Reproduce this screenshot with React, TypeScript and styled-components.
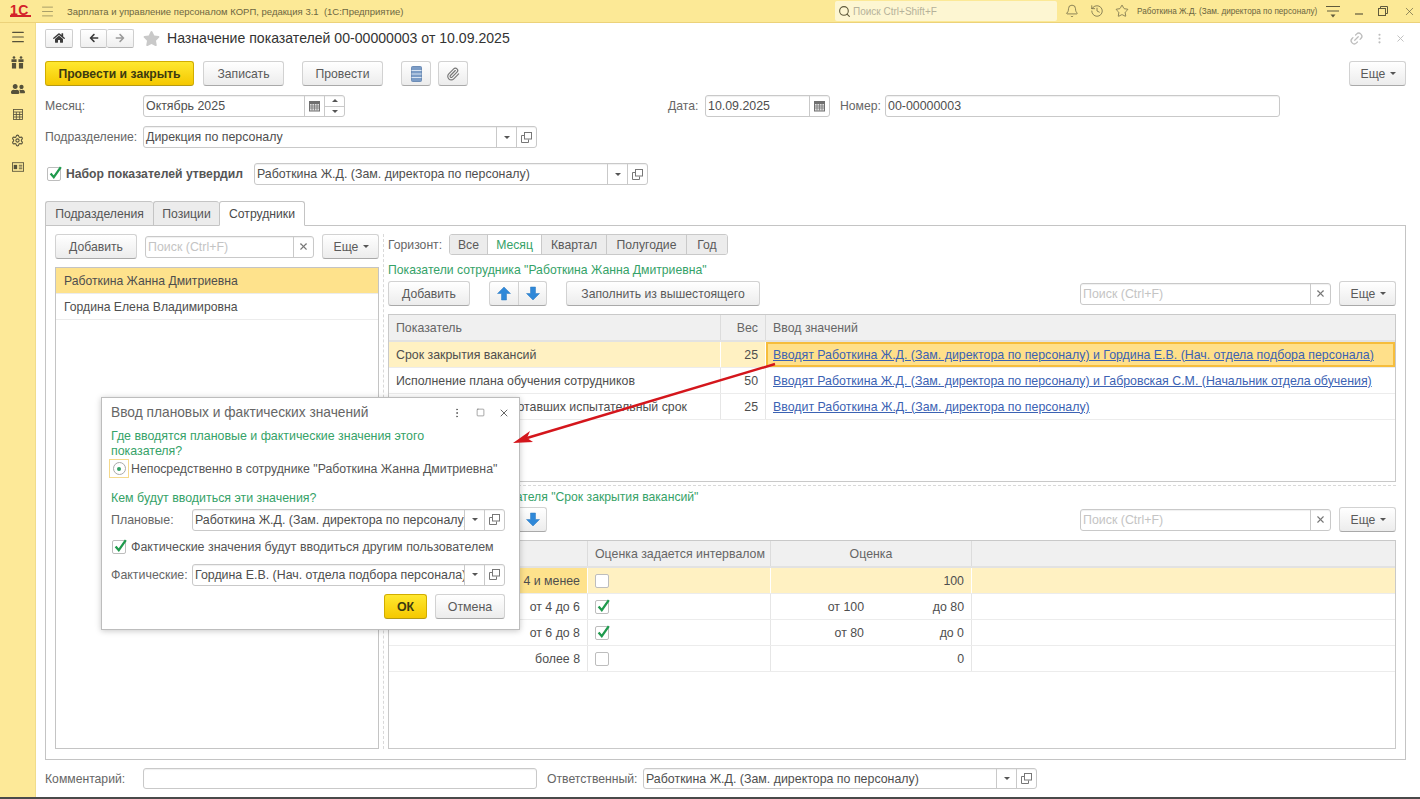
import React from 'react';
import styled, { createGlobalStyle, css } from 'styled-components';
import { FaHome, FaArrowLeft, FaArrowRight, FaStar, FaUserFriends } from 'react-icons/fa';
import { Bell, History, Star, Search as SearchIcon, Paperclip, Link2, MoreVertical, X, Square, Menu, Settings } from 'lucide-react';

const GREEN = '#35a268';
const TEXT = '#4e4e4e';
const LINE = '#c9c9c9';

const Global = createGlobalStyle`
  html, body { margin: 0; padding: 0; height: 100%; background: #fff; }
  body { font-family: "Liberation Sans", Arial, sans-serif; font-size: 12.2px; color: ${TEXT}; overflow: hidden; }
  * { box-sizing: border-box; }
`;

const Page = styled.div`
  position: relative; width: 1420px; height: 799px; display: flex; flex-direction: column;
  overflow: hidden; border-bottom: 2px solid #4a4a4a;
`;
const TopBar = styled.header`
  height: 23px; flex: none; display: flex; align-items: center; background: #fce996;
  border-bottom: 1px solid #ecd27a; color: #6a6440;
`;
const Logo = styled.div`
  width: 36px; padding-left: 10px; flex: none; display: flex; flex-direction: column;
  font: bold 14px/10px "Liberation Sans", sans-serif; color: #d3232a; letter-spacing: 0.5px;
  &::after { content: ''; display: block; width: 21px; height: 2px; background: #d3232a; margin-top: 0; }
`;
const BarMenu = styled.span`display: flex; margin-left: 4px; color: #77724f;`;
const BarTitle = styled.div`
  font-size: 9.5px; margin-left: 12px; width: 404px; white-space: pre; color: #6d6742;
`;
const BarSearch = styled.div`
  width: 222px; height: 20px; margin-left: 364px; background: #fdf6d2; border-radius: 2px; display: flex;
  align-items: center; gap: 2px; padding-left: 3px; font-size: 10px; color: #b5b19a;
`;
const BarIcons = styled.div`
  display: flex; align-items: center; gap: 11px; margin-left: 8px; color: #5f5a3c;
`;
const BarUser = styled.div`
  font-size: 8.2px; margin-left: 8px; width: 182px; white-space: nowrap; color: #6a6440;
`;
const WinIcons = styled.div`
  display: flex; align-items: center; gap: 15px; margin-left: 7px; color: #5f5a3c;
`;
const Body = styled.div`flex: 1; display: flex; min-height: 0;`;
const Sidebar = styled.nav`
  width: 36px; flex: none; background: #fde998; border-right: 1px solid #f0dc8c; display: flex;
  flex-direction: column; align-items: center; gap: 11px; padding: 6px 0 0 0; color: #55513a;
`;
const SideItem = styled.div`width: 16px; height: 15px; display: flex; align-items: center; justify-content: center;`;
const Main = styled.main`
  flex: 1; min-width: 0; display: flex; flex-direction: column; padding: 5px 14px 8px 9px;
`;
const TitleRow = styled.div`display: flex; align-items: center; height: 20px; margin-bottom: 13px;`;
const NavBtn = styled.div<{ $w: number; $dim?: boolean }>`
  width: ${p => p.$w}px; height: 19px; display: flex; align-items: center; justify-content: center;
  border: 1px solid #cfcfcf; border-bottom-color: #b5b5b5; background: linear-gradient(#fff, #efefef);
  color: ${p => (p.$dim ? '#9b9b9b' : '#3a3a3a')};
  border-radius: 2px;
`;
const NavGroup = styled.div`
  display: flex; margin-left: 7px; ${NavBtn} + ${NavBtn} { border-left: 0; }
`;
const StarWrap = styled.div`margin: 0 7px 0 9px; color: #c9c9c9; display: flex;`;
const Title = styled.h1`font-size: 14.1px; font-weight: normal; color: #333; margin: 0; white-space: nowrap; flex: 1;`;
const TitleTools = styled.div`display: flex; gap: 9px; color: #bdbdbd; align-items: center;`;
const LinkIcon = styled(Link2)`transform: rotate(-45deg);`;

const buttonBase = css`
  height: 25px; display: inline-flex; align-items: center; justify-content: center; flex: none;
  border-radius: 3px; white-space: nowrap;
`;
const Btn = styled.div<{ $w: number; $ml?: number }>`
  ${buttonBase}
  width: ${p => p.$w}px; margin-left: ${p => p.$ml ?? 0}px; color: #5a5a5a;
  border: 1px solid #d2d2d2; border-bottom: 1px solid #a9a9a9;
  background: linear-gradient(#fff, #ececec);
`;
const PrimaryBtn = styled.div<{ $w: number; $ml?: number }>`
  ${buttonBase}
  width: ${p => p.$w}px; margin-left: ${p => p.$ml ?? 0}px; font-weight: bold; color: #3d3a10;
  border: 1px solid #d1ad00; border-bottom-color: #b59a14;
  background: linear-gradient(#ffe830, #f5c800);
`;
const MoreBtn = styled(Btn)`
  gap: 5px; padding-left: 2px;
  &::after { content: ''; border: 3px solid transparent; border-top: 3px solid #555; margin-top: 3px; }
`;
const Commands = styled.div`display: flex; align-items: center; margin-bottom: 9px;`;
const Row = styled.div<{ $mb: number; $pr?: number }>`
  display: flex; align-items: center; height: 22px; margin-bottom: ${p => p.$mb}px; padding-right: ${p => p.$pr ?? 0}px;
`;
const Label = styled.label<{ $w?: number; $ml?: number }>`
  color: #666; white-space: nowrap; flex: none; ${p => p.$w && `width: ${p.$w}px;`}
  margin-left: ${p => p.$ml ?? 0}px;
`;
const Field = styled.div<{ $w?: number; $h?: number }>`
  display: flex; height: ${p => p.$h ?? 22}px; ${p => (p.$w ? `width: ${p.$w}px; flex: none;` : 'flex: 1; min-width: 0;')}
  border: 1px solid ${LINE}; border-radius: 3px; background: #fff; box-shadow: inset 0 1px 1px #f0f0f0;
  overflow: hidden;
`;
const FieldText = styled.div<{ $ph?: boolean }>`
  flex: 1; min-width: 0; padding-left: 2px; line-height: 20px; font-size: 12.4px; white-space: nowrap; overflow: hidden;
  color: ${p => (p.$ph ? '#c4c4c4' : TEXT)};
`;
const FieldBtn = styled.div`
  width: 20px; flex: none; border-left: 1px solid ${LINE}; display: flex; align-items: center; justify-content: center; color: #666;
`;
const Spin = styled.div`
  width: 20px; flex: none; border-left: 1px solid ${LINE}; display: flex; flex-direction: column;
`;
const SpinPart = styled.div`
  flex: 1; display: flex; align-items: center; justify-content: center; & + & { border-top: 1px solid ${LINE}; }
`;
const Tri = styled.span<{ $up?: boolean }>`
  width: 0; height: 0; border: 3px solid transparent; border-bottom-width: 0;
  border-top: 3px solid #555;
  ${p => p.$up && 'border-top-width: 0; border-bottom: 3px solid #555; border-top-color: transparent;'}
`;
const CheckBox = styled.span<{ $ml?: number }>`
  width: 14px; height: 14px; flex: none; position: relative; display: inline-block;
  margin-left: ${p => p.$ml ?? 0}px;
  border: 1px solid #bdbdbd; border-radius: 2px; background: #fff;
  svg { position: absolute; left: 0; top: -3px; }
`;
const BoldLabel = styled.span`font-weight: bold; color: #555; margin-left: 5px; width: 188px; flex: none; white-space: nowrap;`;
const Tabs = styled.div`display: flex; height: 25px; flex: none; position: relative; z-index: 1;`;
const Tab = styled.div<{ $w: number; $on?: boolean }>`
  width: ${p => p.$w}px; height: 25px; display: flex; align-items: center; justify-content: center;
  border: 1px solid #c4c4c4; border-right-width: ${p => (p.$on ? 1 : 0)}px; border-radius: 3px 3px 0 0;
  background: ${p => (p.$on ? '#fff' : '#ececec')}; color: ${p => (p.$on ? '#4a4a4a' : '#555')};
  border-bottom-color: ${p => (p.$on ? '#fff' : '#c4c4c4')};
`;
const Panel = styled.section`
  flex: 1; min-height: 0; margin-top: -1px; border: 1px solid #c4c4c4; display: flex; padding: 8px 9px 10px 9px;
`;
const LeftCol = styled.div`width: 324px; flex: none; display: flex; flex-direction: column;`;
const VSplit = styled.div`width: 1px; flex: none; margin: 0 4px; border-left: 1px dashed #d9d9d9;`;
const RightCol = styled.div`flex: 1; min-width: 0; display: flex; flex-direction: column;`;
const Toolbar = styled.div`display: flex; align-items: center; height: 25px; flex: none;`;
const Search = styled(Field)<{ $ml: number }>`
  margin-left: ${p => p.$ml}px;
`;
const ListBox = styled.div`flex: 1; margin-top: 8px; border: 1px solid #c4c4c4; padding: 0;`;
const ListRow = styled.div<{ $on?: boolean }>`
  height: 26px; display: flex; align-items: center; padding-left: 8px; white-space: nowrap;
  background: ${p => (p.$on ? '#fee28c' : '#fff')}; border-bottom: 1px solid #ececec;
`;
const HorizonRow = styled.div`display: flex; align-items: center; height: 21px; flex: none;`;
const Segments = styled.div`
  display: flex; height: 21px; margin-left: 7px; border: 1px solid #c9c9c9; border-radius: 3px; overflow: hidden;
`;
const Segment = styled.div<{ $w: number; $on?: boolean }>`
  width: ${p => p.$w}px; display: flex; align-items: center; justify-content: center;
  background: ${p => (p.$on ? '#fff' : '#ececec')}; color: ${p => (p.$on ? GREEN : '#5a5a5a')};
  & + & { border-left: 1px solid #c9c9c9; }
`;
const GreenTitle = styled.div<{ $mt?: number; $mb?: number }>`
  color: ${GREEN}; white-space: nowrap; margin-top: ${p => p.$mt ?? 0}px; margin-bottom: ${p => p.$mb ?? 0}px; line-height: 15px;
`;
const ArrowGroup = styled.div<{ $ml: number }>`
  margin-left: ${p => p.$ml}px; display: flex; flex: none; height: 25px;
  border: 1px solid #d2d2d2; border-bottom-color: #a9a9a9; border-radius: 3px; background: linear-gradient(#fff, #ececec);
`;
const ArrowPart = styled.div`
  width: 28px; display: flex; align-items: center; justify-content: center;
  & + & { border-left: 1px solid #d2d2d2; }
`;
const Grid = styled.div<{ $h?: number; $grow?: boolean }>`
  border: 1px solid #c9c9c9; flex: ${p => (p.$grow ? 1 : 'none')}; ${p => p.$h && `height: ${p.$h}px;`} margin-top: 8px;
  display: flex; flex-direction: column; overflow: hidden; font-size: 12.35px;
`;
const GridHead = styled.div`display: flex; height: 27px; flex: none; background: #f0f0f0; border-bottom: 2px solid #e2e2e2;`;
const GridRow = styled.div`display: flex; height: 26px; flex: none; border-bottom: 1px solid #ececec;`;
const Cell = styled.div<{ $w?: number; $right?: boolean; $center?: boolean; $bg?: string; $pad?: number; $active?: boolean }>`
  ${p => (p.$w ? `width: ${p.$w}px; flex: none;` : 'flex: 1; min-width: 0;')}
  display: flex; align-items: center; white-space: nowrap; overflow: hidden;
  padding: 0 ${p => p.$pad ?? 7}px;
  justify-content: ${p => (p.$right ? 'flex-end' : p.$center ? 'center' : 'flex-start')};
  background: ${p => p.$bg ?? 'transparent'};
  border-right: 1px solid ${p => (p.$bg ? '#fff' : '#e6e6e6')};
  &:last-child { border-right: 0; }
  ${p => p.$active && 'box-shadow: inset 0 0 0 2px #f6bd3c;'}
`;
const HeadCell = styled(Cell)`color: #666; border-right: 1px solid #dcdcdc;`;
const Anchor = styled.a`color: #3b62b3; text-decoration: underline; font-size: 12.37px;`;
const Pair = styled.span<{ $w: number }>`width: ${p => p.$w}px; flex: none; text-align: right;`;
const HSplit = styled.div`height: 1px; flex: none; margin: 3px 0 3px; border-top: 1px dashed #d9d9d9;`;
const Footer = styled.div`display: flex; align-items: center; height: 21px; flex: none; margin-top: 8px;`;
const Dialog = styled.div`
  position: absolute; left: 101px; top: 397px; width: 419px; height: 233px; background: #fff; font-size: 12.4px;
  border: 1px solid #bdbdbd; box-shadow: 0 1px 6px rgba(0,0,0,.22); padding: 0 14px 0 9px; display: flex; flex-direction: column; z-index: 5;
`;
const DialogHead = styled.div`display: flex; align-items: center; height: 29px; flex: none;`;
const DialogTitle = styled.div`flex: 1; font-size: 13.75px; color: #666; white-space: nowrap;`;
const DialogTools = styled.div`display: flex; align-items: center; gap: 13px; color: #666; margin-right: -5px;`;
const RadioRow = styled.div`display: flex; align-items: center; height: 19px; color: #555; white-space: nowrap; font-size: 12.3px;`;
const RadioFocus = styled.span`
  width: 20px; height: 19px; flex: none; border: 1px solid #f5d98c; display: flex; align-items: center; justify-content: center; margin-right: 2px; margin-left: -2px;
`;
const RadioDot = styled.span`
  width: 13px; height: 13px; border-radius: 50%; border: 1px solid #a9a9a9; display: flex; align-items: center; justify-content: center;
  &::after { content: ''; width: 4px; height: 4px; border-radius: 50%; background: ${GREEN}; }
`;
const DlgRow = styled.div<{ $mt: number }>`display: flex; align-items: center; margin-top: ${p => p.$mt}px; height: 21px; flex: none;`;
const DlgCheckLabel = styled.span`margin-left: 5px; color: #555; white-space: nowrap; font-size: 12.45px;`;
const DlgActions = styled.div`display: flex; justify-content: flex-end; margin-top: 9px;`;
const Arrow = styled.svg`position: absolute; left: 500px; top: 355px; z-index: 6; pointer-events: none;`;

const Check = () => (
  <svg width="16" height="16" viewBox="0 0 16 16"><path d="M2.6 8.4l3.2 3.8L12.8 2.2" fill="none" stroke="#1f9a4d" strokeWidth="2.3" /></svg>
);
const OpenIcon = () => (
  <svg width="11" height="11" viewBox="0 0 11 11" fill="none" stroke="#777"><rect x="3.5" y="0.5" width="7" height="6.5" /><path d="M3 3.5H0.5V10.5H7.5V7.5" /></svg>
);
const CalIcon = () => (
  <svg width="11" height="12" viewBox="0 0 11 12"><rect x="0" y="1" width="11" height="10.5" fill="#6f6f6f" /><rect x="1" y="4" width="9" height="6.5" fill="#ddd" /><path d="M3 4v6.5M5.5 4v6.5M8 4v6.5M1 6h9M1 8h9" stroke="#777" strokeWidth="0.8" /></svg>
);
const DocIcon = () => (
  <svg width="11" height="16" viewBox="0 0 11 16"><rect x="0.5" y="0.5" width="10" height="15" rx="1" fill="#7b9cc6" stroke="#6d8db6" /><path d="M0.5 4.5h10M0.5 8h10M0.5 11.5h10" stroke="#d8e4f2" /></svg>
);
const GiftsIcon = () => (
  <svg width="13" height="13" viewBox="0 0 14 14" fill="#55513a"><rect x="0.5" y="3.5" width="5.5" height="3" /><rect x="8" y="3.5" width="5.5" height="3" /><rect x="1" y="7.5" width="4.5" height="6" /><rect x="8.5" y="7.5" width="4.5" height="6" /><circle cx="3.2" cy="1.6" r="1.4" /><circle cx="10.8" cy="1.6" r="1.4" /></svg>
);
const CalcIcon = () => (
  <svg width="10" height="11" viewBox="0 0 12 13" fill="none" stroke="#55513a"><rect x="0.5" y="0.5" width="11" height="12" /><path d="M0.5 3.5h11M0.5 6.5h11M0.5 9.5h11M4 3.5v9M8 3.5v9" /></svg>
);
const CardIcon = () => (
  <svg width="12" height="10" viewBox="0 0 14 11"><rect x="0.5" y="0.5" width="13" height="10" fill="none" stroke="#55513a" /><rect x="2" y="3" width="4" height="5" fill="#55513a" /><path d="M8 3.5h4M8 5.5h4M8 7.5h4" stroke="#55513a" /></svg>
);
const WinMenu = () => (
  <svg width="14" height="13" viewBox="0 0 14 13"><path d="M0 1.5h14M1 6h12" stroke="#5f5a3c" /><path d="M4.5 9.5h5L7 12.5Z" fill="#5f5a3c" /></svg>
);
const WinMin = () => (
  <svg width="8" height="10" viewBox="0 0 8 10"><path d="M0 8h8" stroke="#5f5a3c" strokeWidth="1.2" /></svg>
);
const WinRestore = () => (
  <svg width="10" height="10" viewBox="0 0 10 10" fill="none" stroke="#5f5a3c"><path d="M2.5 2V0.5H9.5V7.5H7.5" /><rect x="0.5" y="2.5" width="7" height="7" /></svg>
);
const BlockArrow = ({ down }: { down?: boolean }) => (
  <svg width="14" height="15" viewBox="0 0 14 15">
    <path d={down ? 'M4.5 1H9.5V7.5H13.5L7 14L0.5 7.5H4.5Z' : 'M7 1L13.5 7.5H9.5V14H4.5V7.5H0.5Z'} fill="#2f88d8" stroke="#2a78c0" strokeWidth="0.5" />
  </svg>
);
const Drop = () => <FieldBtn><Tri /></FieldBtn>;
const Open = () => <FieldBtn><OpenIcon /></FieldBtn>;
const Clear = () => <FieldBtn><X size={11} strokeWidth={2.4} color="#777" /></FieldBtn>;

const SearchBox = ({ w, ml }: { w: number; ml: number }) => (
  <Search $w={w} $ml={ml}><FieldText $ph>Поиск (Ctrl+F)</FieldText><Clear /></Search>
);

const rowsTop = [
  { name: 'Срок закрытия вакансий', weight: 25, link: 'Вводят Работкина Ж.Д. (Зам. директора по персоналу) и Гордина Е.В. (Нач. отдела подбора персонала)', on: true },
  { name: 'Исполнение плана обучения сотрудников', weight: 50, link: 'Вводят Работкина Ж.Д. (Зам. директора по персоналу) и Габровская С.М. (Начальник отдела обучения)' },
  { name: 'Доля новичков отработавших испытательный срок', weight: 25, link: 'Вводит Работкина Ж.Д. (Зам. директора по персоналу)' },
];
const rowsBottom = [
  { name: '4 и менее', interval: false, value: <>100</>, on: true },
  { name: 'от 4 до 6', interval: true, value: <><Pair $w={100}>от 100</Pair><Pair $w={100}>до 80</Pair></> },
  { name: 'от 6 до 8', interval: true, value: <><Pair $w={100}>от 80</Pair><Pair $w={100}>до 0</Pair></> },
  { name: 'более 8', interval: false, value: <>0</> },
];

export default function App() {
  return (
    <Page>
      <Global />
      <TopBar>
        <Logo>1С</Logo>
        <BarMenu><Menu size={15} strokeWidth={1} /></BarMenu>
        <BarTitle>Зарплата и управление персоналом КОРП, редакция 3.1  (1С:Предприятие)</BarTitle>
        <BarSearch><SearchIcon size={13} color="#5f5a3c" />Поиск Ctrl+Shift+F</BarSearch>
        <BarIcons>
          <Bell size={14} strokeWidth={1.2} />
          <History size={14} strokeWidth={1.2} />
          <Star size={14} strokeWidth={1.2} />
        </BarIcons>
        <BarUser>Работкина Ж.Д. (Зам. директора по персоналу)</BarUser>
        <WinIcons>
          <WinMenu />
          <WinMin />
          <WinRestore />
          <X size={13} strokeWidth={1.2} />
        </WinIcons>
      </TopBar>
      <Body>
        <Sidebar>
          <SideItem><Menu size={16} strokeWidth={1.8} /></SideItem>
          <SideItem><GiftsIcon /></SideItem>
          <SideItem><FaUserFriends size={14} /></SideItem>
          <SideItem><CalcIcon /></SideItem>
          <SideItem><Settings size={13} strokeWidth={2} /></SideItem>
          <SideItem><CardIcon /></SideItem>
        </Sidebar>
        <Main>
          <TitleRow>
            <NavBtn $w={28}><FaHome size={12} /></NavBtn>
            <NavGroup>
              <NavBtn $w={27}><FaArrowLeft size={10} /></NavBtn>
              <NavBtn $w={27} $dim><FaArrowRight size={10} /></NavBtn>
            </NavGroup>
            <StarWrap><FaStar size={17} /></StarWrap>
            <Title>Назначение показателей 00-00000003 от 10.09.2025</Title>
            <TitleTools>
              <LinkIcon size={15} />
              <MoreVertical size={13} />
              <X size={11} />
            </TitleTools>
          </TitleRow>
          <Commands>
            <PrimaryBtn $w={149}>Провести и закрыть</PrimaryBtn>
            <Btn $w={81} $ml={9}>Записать</Btn>
            <Btn $w={81} $ml={18}>Провести</Btn>
            <Btn $w={30} $ml={18}><DocIcon /></Btn>
            <Btn $w={30} $ml={7}><Paperclip size={14} color="#777" /></Btn>
            <MoreBtn $w={57} $ml={881}>Еще</MoreBtn>
          </Commands>
          <Row $mb={9} $pr={126}>
            <Label $w={98}>Месяц:</Label>
            <Field $w={202}>
              <FieldText>Октябрь 2025</FieldText>
              <FieldBtn><CalIcon /></FieldBtn>
              <Spin><SpinPart><Tri $up /></SpinPart><SpinPart><Tri /></SpinPart></Spin>
            </Field>
            <Label $ml={323} $w={37}>Дата:</Label>
            <Field $w={125}>
              <FieldText>10.09.2025</FieldText>
              <FieldBtn><CalIcon /></FieldBtn>
            </Field>
            <Label $ml={10} $w={45}>Номер:</Label>
            <Field><FieldText>00-00000003</FieldText></Field>
          </Row>
          <Row $mb={15}>
            <Label $w={98}>Подразделение:</Label>
            <Field $w={394}>
              <FieldText>Дирекция по персоналу</FieldText>
              <Drop /><Open />
            </Field>
          </Row>
          <Row $mb={16}>
            <CheckBox $ml={2}><Check /></CheckBox>
            <BoldLabel>Набор показателей утвердил</BoldLabel>
            <Field $w={394}>
              <FieldText>Работкина Ж.Д. (Зам. директора по персоналу)</FieldText>
              <Drop /><Open />
            </Field>
          </Row>
          <Tabs>
            <Tab $w={108}>Подразделения</Tab>
            <Tab $w={66}>Позиции</Tab>
            <Tab $w={86} $on>Сотрудники</Tab>
          </Tabs>
          <Panel>
            <LeftCol>
              <Toolbar>
                <Btn $w={82}>Добавить</Btn>
                <SearchBox w={169} ml={8} />
                <MoreBtn $w={57} $ml={8}>Еще</MoreBtn>
              </Toolbar>
              <ListBox>
                <ListRow $on>Работкина Жанна Дмитриевна</ListRow>
                <ListRow>Гордина Елена Владимировна</ListRow>
              </ListBox>
            </LeftCol>
            <VSplit />
            <RightCol>
              <HorizonRow>
                <Label $w={54}>Горизонт:</Label>
                <Segments>
                  <Segment $w={37}>Все</Segment>
                  <Segment $w={54} $on>Месяц</Segment>
                  <Segment $w={65}>Квартал</Segment>
                  <Segment $w={80}>Полугодие</Segment>
                  <Segment $w={41}>Год</Segment>
                </Segments>
              </HorizonRow>
              <GreenTitle $mt={8} $mb={3}>Показатели сотрудника "Работкина Жанна Дмитриевна"</GreenTitle>
              <Toolbar>
                <Btn $w={82}>Добавить</Btn>
                <ArrowGroup $ml={19}>
                  <ArrowPart><BlockArrow /></ArrowPart>
                  <ArrowPart><BlockArrow down /></ArrowPart>
                </ArrowGroup>
                <Btn $w={194} $ml={19}>Заполнить из вышестоящего</Btn>
                <SearchBox w={251} ml={320} />
                <MoreBtn $w={57} $ml={8}>Еще</MoreBtn>
              </Toolbar>
              <Grid $h={168}>
                <GridHead>
                  <HeadCell $w={332}>Показатель</HeadCell>
                  <HeadCell $w={45} $right>Вес</HeadCell>
                  <HeadCell>Ввод значений</HeadCell>
                </GridHead>
                {rowsTop.map(r => (
                  <GridRow key={r.name}>
                    <Cell $w={332} $bg={r.on ? '#fff1c2' : undefined}>{r.name}</Cell>
                    <Cell $w={45} $right $bg={r.on ? '#fff1c2' : undefined}>{r.weight}</Cell>
                    <Cell $bg={r.on ? '#ffe08a' : undefined} $active={r.on}><Anchor>{r.link}</Anchor></Cell>
                  </GridRow>
                ))}
              </Grid>
              <HSplit />
              <GreenTitle $mt={1} $mb={2}>Шкала значений показателя "Срок закрытия вакансий"</GreenTitle>
              <Toolbar>
                <Btn $w={82} />
                <ArrowGroup $ml={19}>
                  <ArrowPart><BlockArrow /></ArrowPart>
                  <ArrowPart><BlockArrow down /></ArrowPart>
                </ArrowGroup>
                <SearchBox w={251} ml={533} />
                <MoreBtn $w={57} $ml={8}>Еще</MoreBtn>
              </Toolbar>
              <Grid $grow>
                <GridHead>
                  <HeadCell $w={199} />
                  <HeadCell $w={183}>Оценка задается интервалом</HeadCell>
                  <HeadCell $w={201} $center>Оценка</HeadCell>
                  <HeadCell />
                </GridHead>
                {rowsBottom.map(r => (
                  <GridRow key={r.name}>
                    <Cell $w={199} $right $bg={r.on ? '#fee28c' : undefined}>{r.name}</Cell>
                    <Cell $w={183} $bg={r.on ? '#fff1c2' : undefined}>
                      <CheckBox>{r.interval && <Check />}</CheckBox>
                    </Cell>
                    <Cell $w={201} $right $bg={r.on ? '#fff1c2' : undefined}>{r.value}</Cell>
                    <Cell $bg={r.on ? '#fff1c2' : undefined} />
                  </GridRow>
                ))}
              </Grid>
            </RightCol>
          </Panel>
          <Footer>
            <Label $w={98}>Комментарий:</Label>
            <Field $w={394} $h={21} />
            <Label $ml={10} $w={96}>Ответственный:</Label>
            <Field $w={394} $h={21}>
              <FieldText>Работкина Ж.Д. (Зам. директора по персоналу)</FieldText>
              <Drop /><Open />
            </Field>
          </Footer>
        </Main>
      </Body>
      <Dialog>
        <DialogHead>
          <DialogTitle>Ввод плановых и фактических значений</DialogTitle>
          <DialogTools>
            <MoreVertical size={12} />
            <Square size={9} strokeWidth={1.5} />
            <X size={12} />
          </DialogTools>
        </DialogHead>
        <GreenTitle $mt={2}>Где вводятся плановые и фактические значения этого<br />показателя?</GreenTitle>
        <RadioRow>
          <RadioFocus><RadioDot /></RadioFocus>
          Непосредственно в сотруднике "Работкина Жанна Дмитриевна"
        </RadioRow>
        <GreenTitle $mt={13}>Кем будут вводиться эти значения?</GreenTitle>
        <DlgRow $mt={3}>
          <Label $w={81}>Плановые:</Label>
          <Field $w={313}>
            <FieldText>Работкина Ж.Д. (Зам. директора по персоналу)</FieldText>
            <Drop /><Open />
          </Field>
        </DlgRow>
        <DlgRow $mt={6}>
          <CheckBox $ml={1}><Check /></CheckBox>
          <DlgCheckLabel>Фактические значения будут вводиться другим пользователем</DlgCheckLabel>
        </DlgRow>
        <DlgRow $mt={7}>
          <Label $w={81}>Фактические:</Label>
          <Field $w={313}>
            <FieldText>Гордина Е.В. (Нач. отдела подбора персонала)</FieldText>
            <Drop /><Open />
          </Field>
        </DlgRow>
        <DlgActions>
          <PrimaryBtn $w={43}>ОК</PrimaryBtn>
          <Btn $w={70} $ml={8}>Отмена</Btn>
        </DlgActions>
      </Dialog>
      <Arrow width="290" height="100" viewBox="0 0 290 100">
        <path d="M275 9L27 83" stroke="#d4161c" strokeWidth="2.4" fill="none" />
        <path d="M13 88L30 76L27 83L33 87Z" fill="#d4161c" />
      </Arrow>
    </Page>
  );
}
